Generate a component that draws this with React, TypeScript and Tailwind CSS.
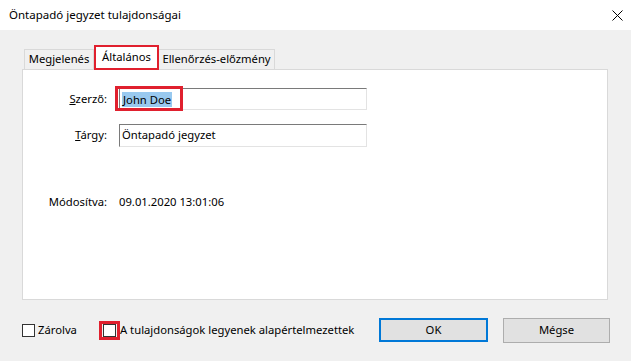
import React from 'react';

const font = { fontFamily: '"Segoe UI", "Noto Sans", "Open Sans", sans-serif' };

const Checkbox: React.FC = () => (
    <span className="inline-block w-[13px] h-[13px] border border-[#333333] bg-white shrink-0" />
);

const App: React.FC = () => {
    return (
        <div className="w-[631px] h-[361px] bg-[#f0f0f0] text-[11.25px] text-black overflow-hidden whitespace-nowrap" style={font}>
            {/* Title bar */}
            <div className="h-[30px] bg-white flex items-center justify-between pl-[9px] pr-[8px]">
                <span className="leading-none text-[11.5px]">Öntapadó jegyzet tulajdonságai</span>
                <svg className="w-[11px] h-[11px]" viewBox="0 0 11 11" fill="none" stroke="#000" strokeWidth={1}>
                    <path d="M0.5 0.5L10.5 10.5M10.5 0.5L0.5 10.5" />
                </svg>
            </div>

            <div className="px-[22px] pt-[16px]">
                {/* Tabs */}
                <div className="flex items-end h-[23px] pl-[2px]">
                    <div className="h-[20px] w-[70px] justify-center border border-b-0 border-[#d9d9d9] bg-[#f0f0f0] flex items-center">
                        Megjelenés
                    </div>
                    <div className="h-[25px] w-[65px] justify-center -mb-px border-2 border-[#e0202e] bg-white flex items-center relative z-10">
                        Általános
                    </div>
                    <div className="h-[20px] w-[116px] justify-center border border-b-0 border-l-0 border-[#d9d9d9] bg-[#f0f0f0] flex items-center">
                        Ellenőrzés-előzmény
                    </div>
                </div>

                {/* Panel */}
                <div className="h-[231px] w-[586px] bg-white border border-[#d9d9d9] pt-[18px]">
                    <div className="grid grid-cols-[84px_248px] gap-x-[12px] items-center">
                        <span className="text-right">
                            <span className="underline">S</span>zerző:
                        </span>
                        <div className="relative h-[22px] border border-[#e3e3e3] border-t-[#7a7a7a] border-l-[#7a7a7a] flex items-center pl-[2px]">
                            <span className="bg-[#99c9ef] px-[1px] leading-[15px]">John Doe</span>
                            <div className="absolute left-[-5px] top-[-3px] w-[68px] h-[25px] border-[3px] border-[#e0202e]" />
                        </div>

                        <span className="text-right mt-[14px]">
                            <span className="underline">T</span>árgy:
                        </span>
                        <div className="h-[23px] mt-[14px] border border-[#e3e3e3] border-t-[#7a7a7a] border-l-[#7a7a7a] flex items-center pl-[2px]">
                            Öntapadó jegyzet
                        </div>

                        <span className="text-right mt-[47px]">Módosítva:</span>
                        <span className="mt-[47px]">09.01.2020 13:01:06</span>
                    </div>
                </div>

                {/* Bottom row */}
                <div className="flex items-center h-[26px] mt-[17px]">
                    <label className="flex items-center gap-[3px] w-[77px]">
                        <Checkbox />
                        <span>Zárolva</span>
                    </label>
                    <label className="flex items-center">
                        <span className="w-[21px] h-[19px] border-[3px] border-[#e0202e] flex items-center justify-center">
                            <Checkbox />
                        </span>
                        <span>A tulajdonságok legyenek alapértelmezettek</span>
                    </label>
                    <button className="ml-auto w-[109px] h-[24px] bg-[#e1e1e1] border-2 border-[#0078d7]">OK</button>
                    <button className="ml-[15px] mr-[-1px] w-[107px] h-[25px] bg-[#e1e1e1] border border-[#adadad]">Mégse</button>
                </div>
            </div>
        </div>
    );
};

export default App;
